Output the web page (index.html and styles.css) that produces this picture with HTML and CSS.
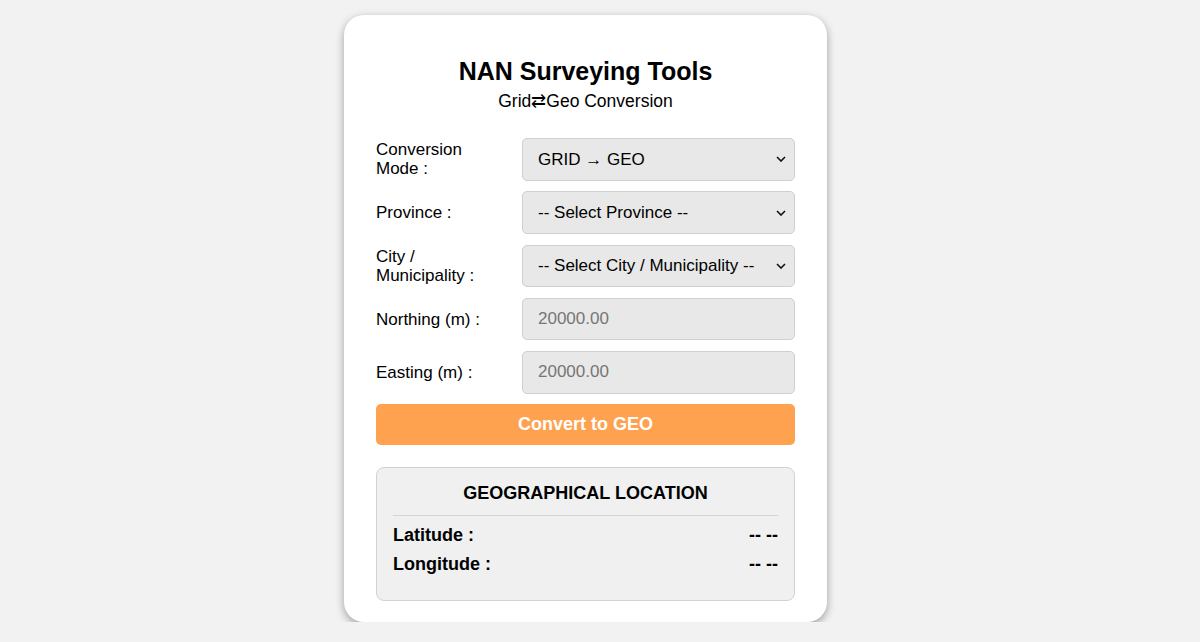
FILE: index.html
```html
<!DOCTYPE html>
<html lang="en">
<head>
<meta charset="utf-8">
<title>NAN Surveying Tools</title>
<link rel="stylesheet" href="styles.css">
</head>
<body>
<main class="card">
  <h1 class="title">NAN Surveying Tools</h1>
  <p class="subtitle">Grid⇄Geo Conversion</p>
  <form class="form">
    <div class="row">
      <label class="label" for="mode">Conversion Mode :</label>
      <select class="field select" id="mode"><option>GRID → GEO</option><option>GEO → GRID</option></select>
    </div>
    <div class="row">
      <label class="label" for="prov">Province :</label>
      <select class="field select" id="prov"><option>-- Select Province --</option></select>
    </div>
    <div class="row">
      <label class="label" for="city">City / Municipality :</label>
      <select class="field select" id="city"><option>-- Select City / Municipality --</option></select>
    </div>
    <div class="row">
      <label class="label" for="north">Northing (m) :</label>
      <input class="field" id="north" type="text" placeholder="20000.00">
    </div>
    <div class="row">
      <label class="label" for="east">Easting (m) :</label>
      <input class="field" id="east" type="text" placeholder="20000.00">
    </div>
    <button class="btn" type="button">Convert to GEO</button>
  </form>
  <section class="result">
    <h2 class="result-title">GEOGRAPHICAL LOCATION</h2>
    <div class="result-row"><span>Latitude :</span><span>-- --</span></div>
    <div class="result-row"><span>Longitude :</span><span>-- --</span></div>
  </section>
</main>
</body>
</html>
```
FILE: styles.css
```css
* { box-sizing: border-box; }
html, body { margin: 0; padding: 0; }
body {
  background: #f2f2f2;
  font-family: "Liberation Sans", Arial, sans-serif;
  color: #000;
  display: flex;
  justify-content: center;
  padding: 15px 29px 0 0;
}
.card {
  width: 483px;
  background: #fff;
  border-radius: 20px;
  box-shadow: 0 3px 8px rgba(0,0,0,0.35);
  padding: 42px 32px 21px;
}
.title {
  margin: 0;
  text-align: center;
  font-size: 25px;
  font-weight: bold;
  line-height: 28px;
}
.subtitle {
  margin: 6px 0 0;
  text-align: center;
  font-size: 17.5px;
  line-height: 20px;
}
.form {
  margin-top: 27px;
  display: flex;
  flex-direction: column;
  gap: 10.75px;
}
.row {
  display: flex;
  align-items: center;
  gap: 26px;
}
.label {
  flex: 0 0 120px;
  font-size: 17px;
  line-height: 19px;
}
.field {
  flex: 1;
  height: 42.5px;
  min-width: 0;
  background-color: #e8e8e8;
  border: 1px solid #cfcfcf;
  border-radius: 5px;
  padding: 0 12px 0 15px;
  font-family: "Liberation Sans", Arial, sans-serif;
  font-size: 17px;
  color: #000;
}
.select {
  appearance: none;
  -webkit-appearance: none;
  background-image: url("data:image/svg+xml;utf8,<svg xmlns='http://www.w3.org/2000/svg' width='10' height='6' viewBox='0 0 10 6'><path d='M1 1l4 4 4-4' fill='none' stroke='%23111' stroke-width='1.6'/></svg>");
  background-repeat: no-repeat;
  background-position: right 8px center;
  background-size: 10px 6px;
}
.field::placeholder { color: #767676; }
.btn {
  height: 41px;
  border: none;
  border-radius: 5px;
  background: #ffa24f;
  color: #fff;
  font-family: "Liberation Sans", Arial, sans-serif;
  font-size: 18px;
  font-weight: bold;
}
.result {
  margin-top: 22px;
  background: #f0f0f0;
  border: 1px solid #d2d2d2;
  border-radius: 8px;
  padding: 15px 16px 17px;
}
.result-title {
  margin: 0;
  text-align: center;
  font-size: 18px;
  font-weight: bold;
  line-height: 20px;
  padding-bottom: 12px;
  border-bottom: 1px solid #d4d4d4;
  margin-bottom: 9px;
}
.result-row {
  display: flex;
  justify-content: space-between;
  font-size: 18px;
  font-weight: bold;
  line-height: 20px;
  margin-bottom: 9px;
}
```
